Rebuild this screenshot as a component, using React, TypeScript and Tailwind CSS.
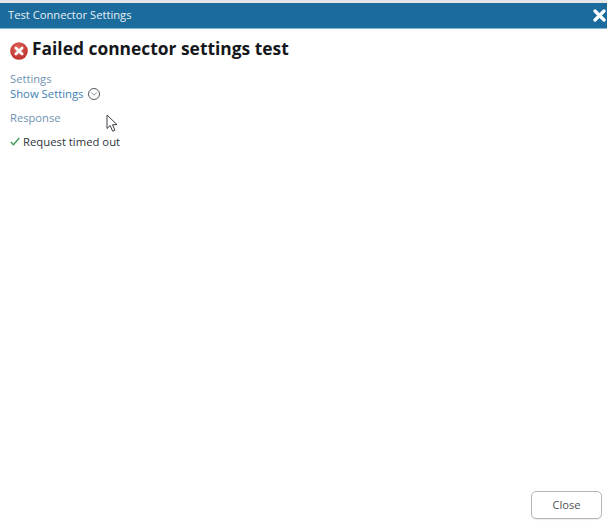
import { ChevronDown } from "lucide-react";

const font = { fontFamily: '"Open Sans", sans-serif' };

// Mouse pointer captured in the screenshot
const Cursor = () => (
  <svg className="absolute left-[106px] top-[114px]" width="13" height="19" viewBox="0 0 13 19">
    <path d="M1 1 L1 14.5 L4.2 11.6 L6.6 17.2 L8.9 16.2 L6.5 10.8 L11 10.6 Z" fill="#fff" stroke="#3a3f44" strokeWidth="1" strokeLinejoin="round" />
  </svg>
);

const ErrorIcon = () => (
  <svg width="18" height="18" viewBox="0 0 18 18" className="shrink-0">
    <defs>
      <radialGradient id="err" cx="45%" cy="35%" r="70%">
        <stop offset="0%" stopColor="#e2685f" />
        <stop offset="100%" stopColor="#b92a27" />
      </radialGradient>
    </defs>
    <circle cx="9" cy="9" r="8.8" fill="url(#err)" />
    <path d="M5.9 5.9 L12.1 12.1 M12.1 5.9 L5.9 12.1" stroke="#fff" strokeWidth="2.8" strokeLinecap="round" />
  </svg>
);

export default function App() {
  return (
    <div className="relative flex h-[522px] w-[607px] flex-col overflow-hidden bg-white" style={font}>
      <div className="h-[3px] bg-[#e4e6e8]" />
      <header className="flex h-[26px] items-center justify-between border-b border-[#7fb6d3] bg-[#1b6c9d] pl-[8px] pr-[1px]">
        <span className="text-[11.2px] text-[#e6f0f6]">Test Connector Settings</span>
        <svg width="13" height="13" viewBox="0 0 13 13">
          <path d="M2 2 L11 11 M11 2 L2 11" stroke="#fff" strokeWidth="3.2" strokeLinecap="round" />
        </svg>
      </header>

      <main className="flex flex-1 flex-col pl-[10px]">
        <div className="mt-[7px] flex items-center gap-[4px]">
          <div className="mt-[5px]">
            <ErrorIcon />
          </div>
          <h1 className="text-[17.4px] leading-[24px] font-bold text-[#15181c]">Failed connector settings test</h1>
        </div>

        <div className="mt-[11px] text-[11.2px] leading-[15px] text-[#6f93b3]">Settings</div>
        <div className="flex items-center gap-[4px] text-[11.3px] leading-[15px] text-[#3f7fb5]">
          <span>Show Settings</span>
          <span className="flex h-[12px] w-[12px] items-center justify-center rounded-full border border-[#555b60]">
            <ChevronDown size={10} strokeWidth={1.6} className="text-[#555b60]" />
          </span>
        </div>

        <div className="mt-[9px] text-[11.2px] leading-[15px] text-[#6f93b3]">Response</div>
        <div className="mt-[9px] flex items-center gap-[3px] text-[11.3px] leading-[15px] text-[#30363b]">
          <svg width="10" height="9" viewBox="0 0 10 9">
            <path d="M0.8 5 L3.4 7.8 L9.3 1" fill="none" stroke="#3f9a55" strokeWidth="1.3" />
          </svg>
          <span>Request timed out</span>
        </div>

        <div className="mt-auto mb-[3px] flex justify-end pr-[5px]">
          <button className="h-[28px] w-[71px] rounded-[5px] border border-[#b4b7ba] bg-white text-[11.2px] text-[#4e5358] shadow-[0_1px_1px_rgba(0,0,0,0.08)]">
            Close
          </button>
        </div>
      </main>
      <Cursor />
    </div>
  );
}
